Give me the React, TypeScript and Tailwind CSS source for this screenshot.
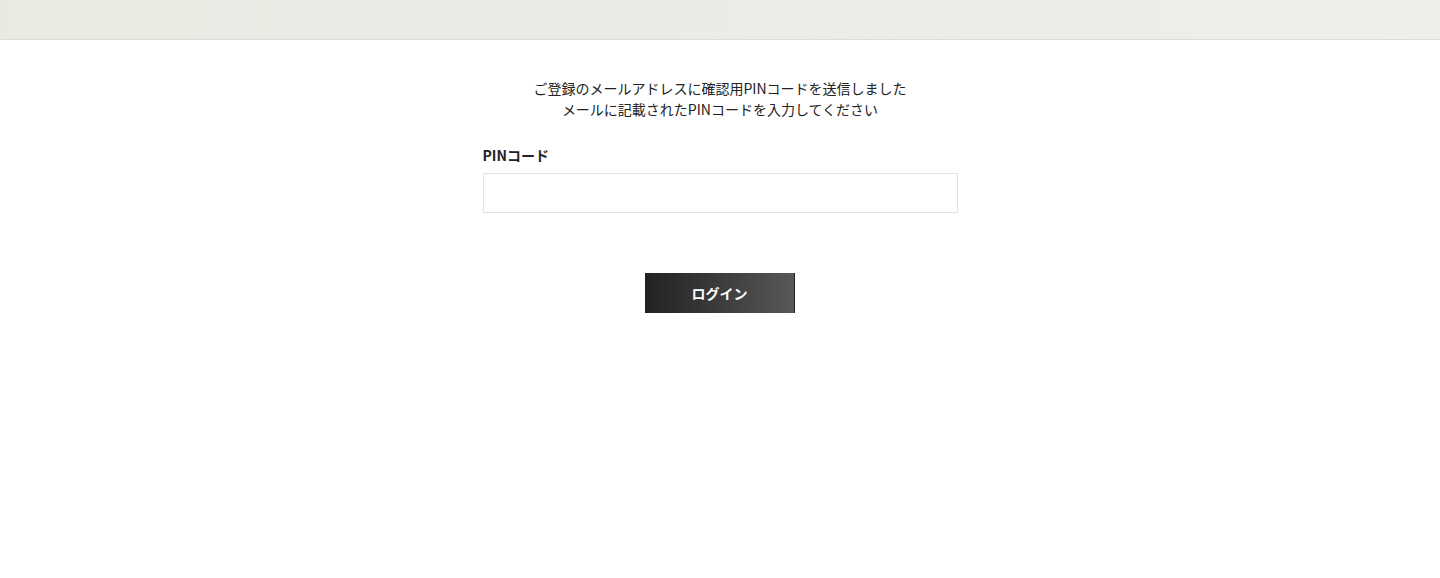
export default function App() {
  return (
    <div
      className="min-h-[578px] w-full bg-white text-[#222]"
      style={{ fontFamily: '"Noto Sans CJK JP", "Noto Sans", sans-serif' }}
    >
      {/* Header bar */}
      <div className="h-[40px] w-full border-b border-[#dcdcd8] bg-gradient-to-r from-[#eae9e2] to-[#eeeeec]" />

      <main className="flex flex-col items-center pt-[38px]">
        <p className="text-center text-[14px] leading-[21px] text-[#222]">
          ご登録のメールアドレスに確認用PINコードを送信しました
          <br />
          メールに記載されたPINコードを入力してください
        </p>

        <div className="mt-[25px] w-[475px]">
          <label className="block text-[14px] font-bold leading-[21px] text-[#222]">PINコード</label>
          <input
            type="text"
            className="mt-[7px] block h-[40px] w-full border border-[#e2e2e2] bg-white px-3 text-[14px] outline-none"
          />
        </div>

        <button
          type="button"
          className="mt-[60px] flex h-[40px] w-[150px] items-center justify-center border-r border-[#222] bg-gradient-to-r from-[#222222] to-[#585858] text-[14px] font-bold text-white"
        >
          ログイン
        </button>
      </main>
    </div>
  );
}
